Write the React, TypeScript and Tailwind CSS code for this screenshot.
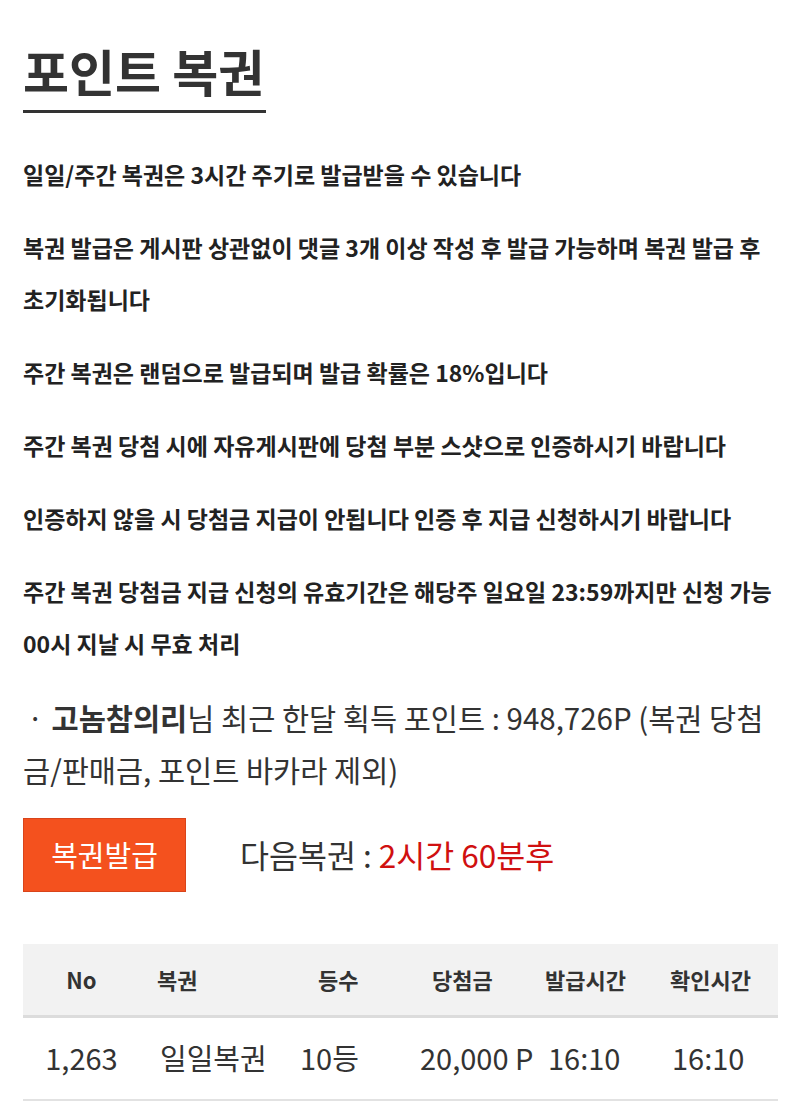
import React from 'react';

const notices: string[] = [
  '일일/주간 복권은 3시간 주기로 발급받을 수 있습니다',
  '복권 발급은 게시판 상관없이 댓글 3개 이상 작성 후 발급 가능하며 복권 발급 후 초기화됩니다',
  '주간 복권은 랜덤으로 발급되며 발급 확률은 18%입니다',
  '주간 복권 당첨 시에 자유게시판에 당첨 부분 스샷으로 인증하시기 바랍니다',
  '인증하지 않을 시 당첨금 지급이 안됩니다 인증 후 지급 신청하시기 바랍니다',
  '주간 복권 당첨금 지급 신청의 유효기간은 해당주 일요일 23:59까지만 신청 가능 00시 지날 시 무효 처리',
];

const font = { fontFamily: '"Noto Sans CJK KR", "Noto Sans", sans-serif' };

export default function App() {
  return (
    <div className="bg-white min-h-screen px-[23px] pt-[34px] text-[#333]" style={font}>
      <h1 className="inline-block border-b-[3px] border-[#333] pb-[4px] pr-[2px] text-[50px] font-bold leading-[72px] text-[#333]">
        포인트 복권
      </h1>

      {/* Notices */}
      <div className="mt-[35px] space-y-[21px]">
        {notices.map((n) => (
          <p key={n} className="text-[23px] font-bold leading-[52px] text-[#222]">
            {n}
          </p>
        ))}
      </div>

      <p className="mt-[22px] text-[29.5px] leading-[52px] text-[#333]">
        <span className="ml-[4px] mr-[8px]">·</span>
        <b className="font-bold">고놈참의리</b>님 최근 한달 획득 포인트 : 948,726P (복권 당첨금/판매금, 포인트 바카라 제외)
      </p>

      <div className="mt-[23px] flex items-center">
        <button className="h-[74px] w-[163px] bg-[#f4511e] border border-[#d9441a] text-white text-[29px]">
          복권발급
        </button>
        <div className="ml-[54px] text-[31.5px] text-[#333]">
          다음복권 : <span className="text-[#d01010]">2시간 60분후</span>
        </div>
      </div>

      <table className="mt-[52px] w-[755px] table-fixed border-collapse">
        <colgroup>
          <col className="w-[117px]" />
          <col className="w-[150px]" />
          <col className="w-[120px]" />
          <col className="w-[130px]" />
          <col className="w-[125px]" />
          <col className="w-[113px]" />
        </colgroup>
        <thead>
          <tr className="h-[72px] bg-[#f2f2f2] border-b-[3px] border-[#dcdcdc] text-[22px] font-bold text-[#333] whitespace-nowrap">
            <th className="text-center">No</th>
            <th className="text-left pl-[17px]">복권</th>
            <th className="text-left pl-[28px]">등수</th>
            <th className="text-left pl-[22px]">당첨금</th>
            <th className="text-left pl-[5px]">발급시간</th>
            <th className="text-left pl-[5px]">확인시간</th>
          </tr>
        </thead>
        <tbody>
          <tr className="h-[84px] border-b-[3px] border-[#e2e2e2] text-[29px] text-[#333] whitespace-nowrap">
            <td className="text-center">1,263</td>
            <td className="text-left pl-[20px]">일일복권</td>
            <td className="text-left pl-[10px]">10등</td>
            <td className="text-left pl-[10px]">20,000 P</td>
            <td className="text-left pl-[8px]">16:10</td>
            <td className="text-left pl-[7px]">16:10</td>
          </tr>
        </tbody>
      </table>
    </div>
  );
}
